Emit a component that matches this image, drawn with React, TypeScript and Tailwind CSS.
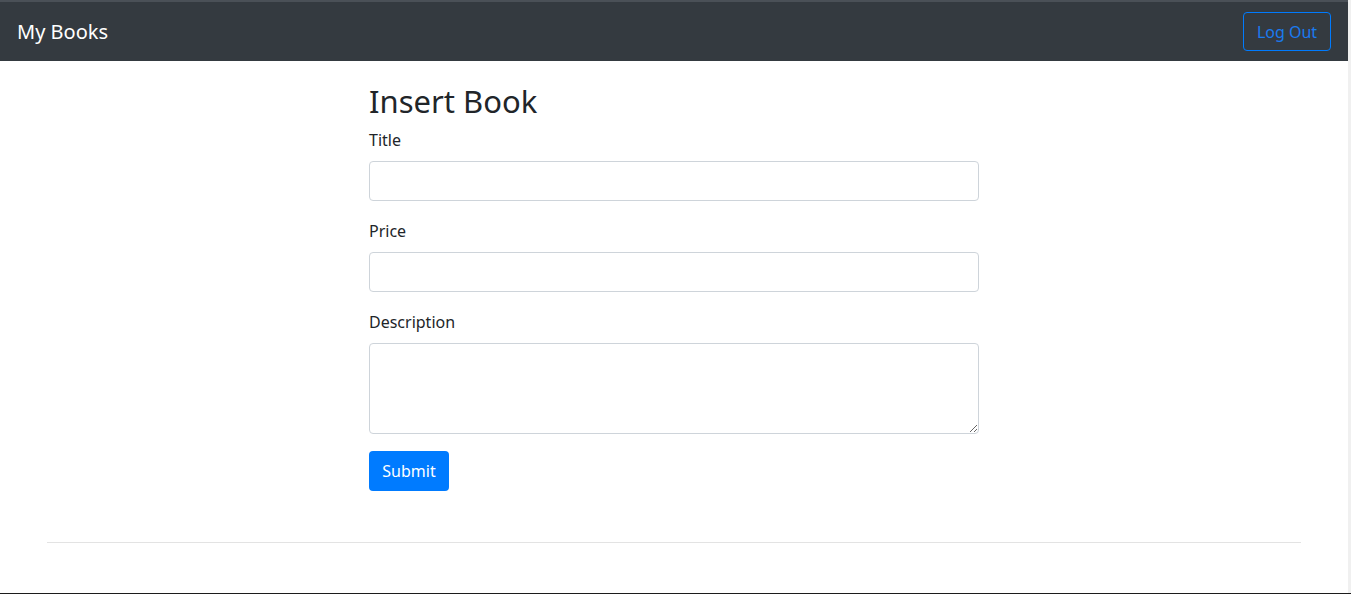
const font = { fontFamily: '"Noto Sans", "Open Sans", sans-serif' };

function Field({ label, tall = false }: { label: string; tall?: boolean }) {
    return (
        <div className="mb-[18px]">
            <label className="block text-[16px] leading-[24px] mb-[9px] text-[#212529]">{label}</label>
            {tall ? (
                <textarea className="block w-full h-[91px] border border-[#ced4da] rounded-[4px] px-3 py-1.5 resize-y bg-white" />
            ) : (
                <input type="text" className="block w-full h-[40px] border border-[#ced4da] rounded-[4px] px-3 bg-white" />
            )}
        </div>
    );
}

export default function App() {
    return (
        <div className="flex w-full h-[594px] overflow-hidden bg-white border-b border-[#1c1c1c]" style={font}>
            <div className="flex-1 flex flex-col">
                {/* Navbar */}
                <nav className="h-[61px] bg-[#343a40] border-t-2 border-[#4a5057] flex items-center justify-between pl-[17px] pr-[17px]">
                    <span className="text-white text-[20px] leading-none">My Books</span>
                    <button className="h-[39px] w-[88px] border border-[#007bff] rounded-[4px] text-[#1a7bf0] text-[16px] leading-none">
                        Log Out
                    </button>
                </nav>

                {/* Form */}
                <main className="w-[610px] mx-auto pt-[20px]">
                    <h2 className="text-[31px] leading-[40px] text-[#212529] mb-[7px]">Insert Book</h2>
                    <Field label="Title" />
                    <Field label="Price" />
                    <Field label="Description" tall />
                    <button className="-mt-[1px] h-[40px] w-[80px] bg-[#007bff] text-white text-[16px] rounded-[4px]">
                        Submit
                    </button>
                </main>

                <hr className="mt-[51px] mx-[47px] border-t border-[#e3e3e3]" />
            </div>
            <div className="w-[3px] bg-[#f0f0f0]" />
        </div>
    );
}
